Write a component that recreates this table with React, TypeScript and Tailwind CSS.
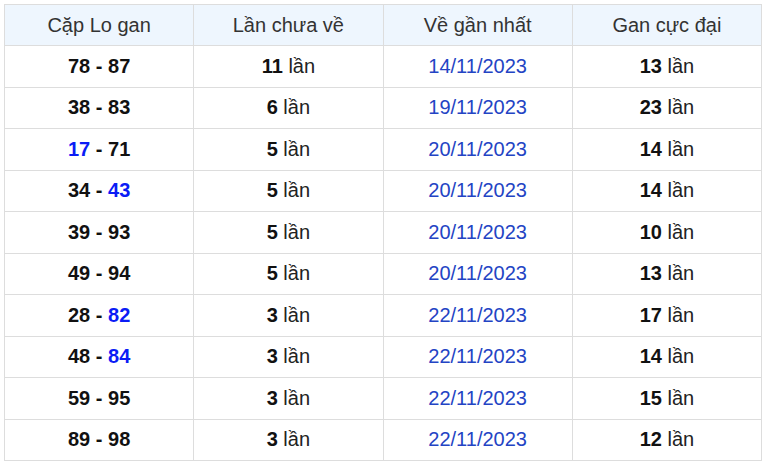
import React from "react";

type Row = { a: string; b: string; ha?: boolean; hb?: boolean; miss: string; date: string; max: string };

const rows: Row[] = [
  { a: "78", b: "87", miss: "11", date: "14/11/2023", max: "13" },
  { a: "38", b: "83", miss: "6", date: "19/11/2023", max: "23" },
  { a: "17", b: "71", ha: true, miss: "5", date: "20/11/2023", max: "14" },
  { a: "34", b: "43", hb: true, miss: "5", date: "20/11/2023", max: "14" },
  { a: "39", b: "93", miss: "5", date: "20/11/2023", max: "10" },
  { a: "49", b: "94", miss: "5", date: "20/11/2023", max: "13" },
  { a: "28", b: "82", hb: true, miss: "3", date: "22/11/2023", max: "17" },
  { a: "48", b: "84", hb: true, miss: "3", date: "22/11/2023", max: "14" },
  { a: "59", b: "95", miss: "3", date: "22/11/2023", max: "15" },
  { a: "89", b: "98", miss: "3", date: "22/11/2023", max: "12" },
];

export default function App() {
  return (
    <div className="bg-white pt-1 pl-1 pr-[3px] pb-1" style={{ fontFamily: '"Liberation Sans", Arial, sans-serif' }}>
      <table className="w-full border-collapse table-fixed text-[20px] leading-[23px]">
        <thead>
          <tr className="bg-[#eef6fe] h-[41px]">
            {["Cặp Lo gan", "Lần chưa về", "Về gần nhất", "Gan cực đại"].map((h) => (
              <th key={h} className="border border-[#dddddd] font-normal text-[#333333] text-center p-0">
                {h}
              </th>
            ))}
          </tr>
        </thead>
        <tbody>
          {rows.map((r, i) => (
            <tr key={i} className="h-[41.5px]">
              <td className="border border-[#dddddd] text-center p-0 font-bold text-[#111111]">
                <span className={r.ha ? "text-[#0b1cf5]" : ""}>{r.a}</span>
                {" - "}
                <span className={r.hb ? "text-[#0b1cf5]" : ""}>{r.b}</span>
              </td>
              <td className="border border-[#dddddd] text-center p-0 text-[#222222]">
                <b className="text-[#111111]">{r.miss}</b> lần
              </td>
              <td className="border border-[#dddddd] text-center p-0 text-[#2344c4]">{r.date}</td>
              <td className="border border-[#dddddd] text-center p-0 text-[#222222]">
                <b className="text-[#111111]">{r.max}</b> lần
              </td>
            </tr>
          ))}
        </tbody>
      </table>
    </div>
  );
}
